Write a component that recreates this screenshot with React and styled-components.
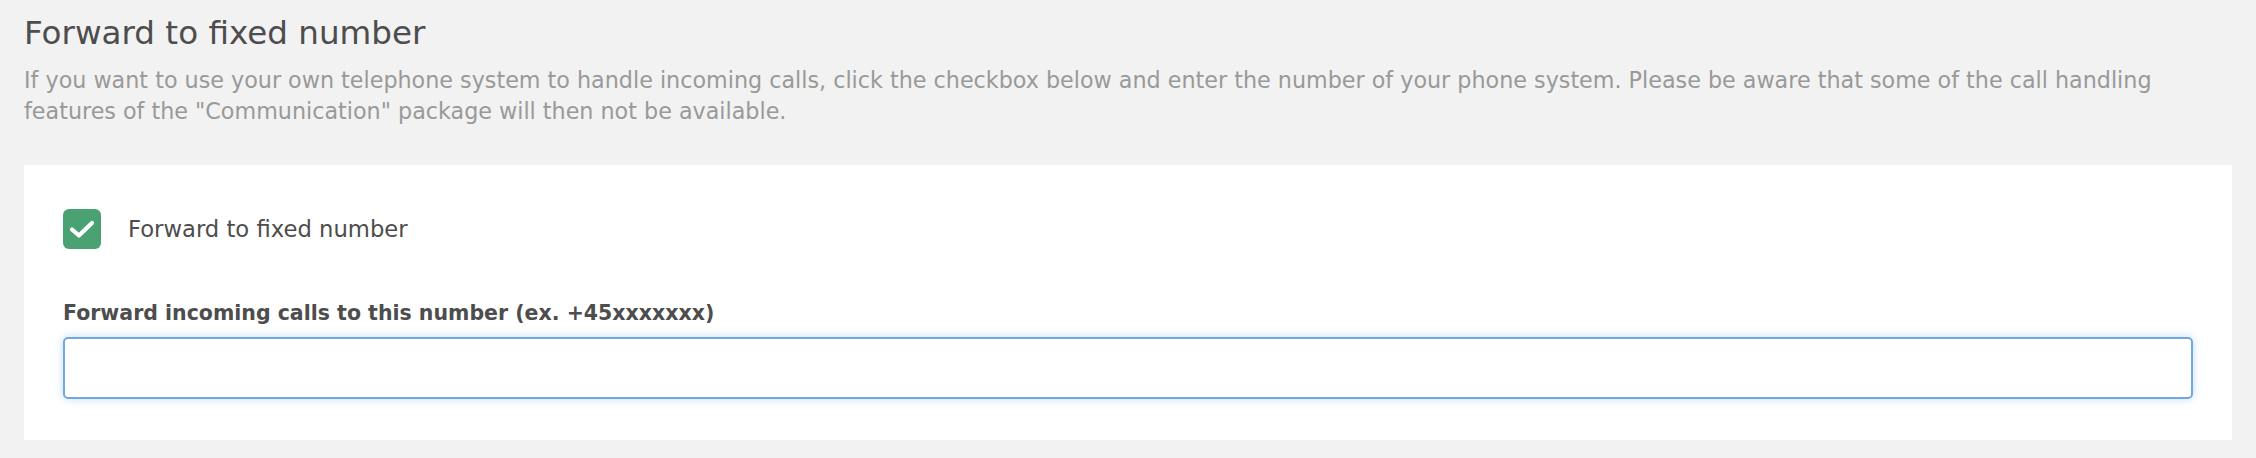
import styled, { createGlobalStyle } from 'styled-components';

const GlobalStyle = createGlobalStyle`
  html, body {
    margin: 0;
    padding: 0;
    background: #f2f2f2;
  }
  body {
    font-family: 'DejaVu Sans', 'Open Sans', sans-serif;
  }
`;

function CheckMark() {
  return (
    <svg width="38" height="40" viewBox="0 0 38 40">
      <path
        d="M9 20.5 L16 26.5 L29 14"
        fill="none"
        stroke="#fff"
        strokeWidth="4.2"
        strokeLinecap="round"
        strokeLinejoin="round"
      />
    </svg>
  );
}

function App() {
  return (
    <>
      <GlobalStyle />
      <Page>
        <Title>Forward to fixed number</Title>
        <Description>
          If you want to use your own telephone system to handle incoming calls, click the checkbox
          below and enter the number of your phone system. Please be aware that some of the call
          handling
          <br />
          features of the "Communication" package will then not be available.
        </Description>
        <Card>
          <CheckRow>
            <CheckBox checked>
              <CheckMark />
            </CheckBox>
            <CheckLabel>Forward to fixed number</CheckLabel>
          </CheckRow>
          <Field>
            <FieldLabel htmlFor="fixed-number">
              Forward incoming calls to this number (ex. +45xxxxxxx)
            </FieldLabel>
            <Input id="fixed-number" type="text" />
          </Field>
        </Card>
      </Page>
    </>
  );
}

const Page = styled.div`
  display: flex;
  flex-direction: column;
  padding: 13px 24px 16px;
  height: 458px;
  box-sizing: border-box;
`;

const Title = styled.h2`
  margin: 0;
  font-size: 32.6px;
  line-height: 40px;
  font-weight: normal;
  color: #4d4d4d;
`;

const Description = styled.p`
  margin: 12px 0 0;
  font-size: 22.25px;
  line-height: 31px;
  color: #999999;
  white-space: nowrap;
`;

const Card = styled.div`
  margin-top: 38px;
  background: #fff;
  padding: 44px 39px 41px;
  display: flex;
  flex-direction: column;
`;

const CheckRow = styled.label`
  display: flex;
  align-items: center;
  gap: 27px;
  cursor: pointer;
`;

const CheckBox = styled.span`
  display: flex;
  width: 38px;
  height: 40px;
  border-radius: 6px;
  background: ${(p) => (p.checked ? '#4aa272' : '#fff')};
  flex-shrink: 0;
`;

const CheckLabel = styled.span`
  font-size: 22.7px;
  color: #4d4d4d;
  line-height: 30px;
`;

const Field = styled.div`
  display: flex;
  flex-direction: column;
  gap: 12px;
  margin-top: 52px;
`;

const FieldLabel = styled.label`
  font-size: 20.5px;
  line-height: 24px;
  font-weight: bold;
  color: #4d4d4d;
`;

const Input = styled.input`
  height: 62px;
  box-sizing: border-box;
  border: 2px solid #70a9e2;
  border-radius: 5px;
  box-shadow: 0 0 10px rgba(110, 168, 226, 0.4);
  outline: none;
  font-size: 20px;
  padding: 0 16px;
  font-family: inherit;
  color: #4d4d4d;
`;

export default App;
